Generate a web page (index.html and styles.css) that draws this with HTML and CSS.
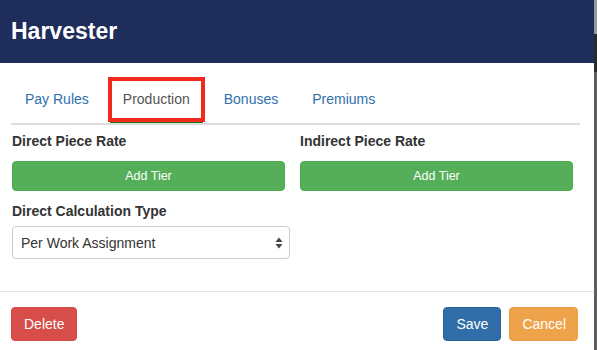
FILE: index.html
```html
<!DOCTYPE html>
<html lang="en">
<head>
    <meta charset="UTF-8">
    <meta name="viewport" content="width=device-width, initial-scale=1.0">
    <title>Harvester</title>
    <link rel="stylesheet" href="styles.css">
</head>
<body>
    <div class="page">
        <div class="modal">
            <div class="modal-header">
                <h1>Harvester</h1>
            </div>

            <div class="modal-body">
                <ul class="nav-tabs">
                    <li class="tab">Pay Rules</li>
                    <li class="tab active">Production</li>
                    <li class="tab">Bonuses</li>
                    <li class="tab">Premiums</li>
                </ul>

                <div class="rates">
                    <div class="rate">
                        <label>Direct Piece Rate</label>
                        <button class="btn btn-success">Add Tier</button>
                    </div>
                    <div class="rate">
                        <label>Indirect Piece Rate</label>
                        <button class="btn btn-success">Add Tier</button>
                    </div>
                </div>

                <div class="form-group">
                    <label>Direct Calculation Type</label>
                    <div class="select">
                        <span>Per Work Assignment</span>
                        <svg width="8" height="12" viewBox="0 0 8 12">
                            <path d="M4 0.5 L7.5 5 L0.5 5 Z" fill="#444"/>
                            <path d="M4 11.5 L7.5 7 L0.5 7 Z" fill="#444"/>
                        </svg>
                    </div>
                </div>
            </div>

            <div class="modal-footer">
                <button class="btn btn-danger">Delete</button>
                <div class="footer-right">
                    <button class="btn btn-primary">Save</button>
                    <button class="btn btn-warning">Cancel</button>
                </div>
            </div>
        </div>
        <div class="backdrop-edge"></div>
    </div>
</body>
</html>
```

FILE: styles.css
```css
body {
    margin: 0;
    font-family: "Liberation Sans", Arial, sans-serif;
    font-size: 14px;
    color: #333;
    background: #fff;
}
.page {
    display: flex;
    height: 350px;
    overflow: hidden;
}
.modal {
    width: 594px;
    display: flex;
    flex-direction: column;
    background: white;
}
.backdrop-edge {
    width: 3px;
    background: linear-gradient(#9a9a9a 0, #9a9a9a 34px, #2a2a2a 34px, #2a2a2a 72px, #5e5e5e 72px);
}
.modal-header {
    height: 63px;
    display: flex;
    align-items: center;
    padding: 0 11px;
    background-color: #1f2d5a;
    flex-shrink: 0;
}
.modal-header h1 {
    margin: 0;
    font-size: 23px;
    font-weight: bold;
    color: white;
}
.modal-body {
    height: 228px;
    padding: 15px 14px 0 11px;
    box-sizing: border-box;
}
.nav-tabs {
    display: flex;
    gap: 8px;
    margin: 0;
    padding: 0 0 0 1px;
    list-style: none;
    border-bottom: 2px solid #ddd;
}
.tab {
    height: 45px;
    padding: 1px 13px 0;
    display: flex;
    align-items: center;
    box-sizing: border-box;
    border-bottom: 4px solid transparent;
    color: #2f6fab;
}
.tab.active {
    position: relative;
    color: #555;
    border-bottom-color: #1a7a1a;
}
/* red highlight drawn around the active tab */
.tab.active::after {
    content: "";
    position: absolute;
    top: -1px;
    left: -2px;
    right: -2px;
    bottom: -3px;
    border: 4px solid #f4291d;
}
.rates {
    display: grid;
    grid-template-columns: 273px 273px;
    gap: 15px;
    margin-top: 6px;
    padding-left: 1px;
}
label {
    display: block;
    font-weight: bold;
    line-height: 20px;
}
.rate label {
    margin-bottom: 10px;
}
.form-group {
    margin-top: 10px;
    padding-left: 1px;
}
.form-group label {
    margin-bottom: 5px;
}
.select {
    width: 278px;
    height: 33px;
    box-sizing: border-box;
    border: 1px solid #ccc;
    border-radius: 4px;
    display: flex;
    align-items: center;
    justify-content: space-between;
    padding: 0 6px 0 8px;
    color: #333;
}
.btn {
    font-family: inherit;
    font-size: 14px;
    color: white;
    border: 1px solid transparent;
    border-radius: 4px;
    padding: 0 12px;
    height: 34px;
    cursor: pointer;
}
.btn-success {
    width: 100%;
    height: 30px;
    background-color: #55af59;
    border-color: #4ca750;
    font-size: 12.5px;
}
.btn-danger {
    background-color: #d64d49;
    border-color: #cf4642;
}
.btn-primary {
    background-color: #2f6ea9;
    border-color: #2a649b;
}
.btn-warning {
    background-color: #eea34b;
    border-color: #eb9c40;
    padding: 0 11px 0 12px;
}
.modal-footer {
    border-top: 1px solid #e5e5e5;
    padding: 15px 16px 0 11px;
    display: flex;
    justify-content: space-between;
    flex: 1;
}
.footer-right {
    display: flex;
    gap: 8px;
}
```
